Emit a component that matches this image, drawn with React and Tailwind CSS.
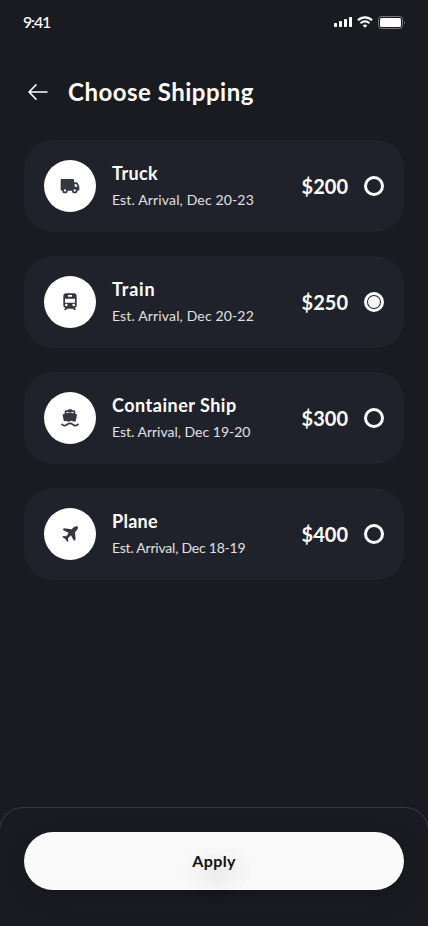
function TruckIcon() {
  return (
    <svg viewBox="0 0 60 60" fill="currentColor" className="size-5">
      <path
        fillRule="evenodd"
        d="M6 9h32c3 0 4 1 4 4v6h5c3 0 5 1 7 4l3 6c1 2 1 4 1 6v5c0 3-1 4-4 4h-2a8 8 0 0 1-16 0H23a8 8 0 0 1-16 0H6c-3 0-4-1-4-4V13c0-3 1-4 4-4Zm38 15v8h9l-4-7c-.500-.800-1-1-2-1h-3ZM15 40a3.500 3.500 0 1 0 0 7 3.500 3.500 0 0 0 0-7Zm29 0a3.500 3.500 0 1 0 0 7 3.500 3.500 0 0 0 0-7Z"
      />
    </svg>
  )
}

function TrainIcon() {
  return (
    <svg viewBox="0 0 60 60" fill="currentColor" className="size-5">
      <path
        fillRule="evenodd"
        d="M18 4h24c5 0 8 3 8 9v27c0 5-2 7-6 8l4 6h-6l-3-4H21l-3 4h-6l4-6c-4-1-6-3-6-8V13c0-6 3-9 8-9Zm6 5v5h12V9H24ZM15 20v12h30V20H15Zm4 15a4 4 0 1 0 0 8 4 4 0 0 0 0-8Zm22 0a4 4 0 1 0 0 8 4 4 0 0 0 0-8Z"
      />
    </svg>
  )
}

function ShipIcon() {
  return (
    <svg viewBox="0 0 60 60" fill="currentColor" className="size-5">
      <path
        fillRule="evenodd"
        d="M26 4h8c1.500 0 2 1 2 3h5c3 0 5 2 5 5v5c3 1 5 2 5 5l-4 17c-2 2-5 3-8 1-3-2-6-2-9 0s-6 2-9 0-5-1-8 0c-2-1-2-3-2-4L8 22c0-3 2-4 6-5v-5c0-3 2-5 5-5h5c0-2 .500-3 2-3Zm-7 8v4l11-3 11 3v-4H19Z"
      />
      <path
        d="M6 49c5 5 11 5 16 0 5-4 11-4 16 0 5 5 11 5 16 0"
        fill="none"
        stroke="currentColor"
        strokeWidth="5"
        strokeLinecap="round"
      />
    </svg>
  )
}

function PlaneIcon() {
  return (
    <svg viewBox="0 0 60 60" fill="currentColor" className="size-5">
      <path d="m8 17 4-4 23 3 7-7c4-3 9-3 11-1s1 6-2 10l-6 7 2 21-5 5-9-17-9 9 1 8-3 3-6-9-9-6 3-3 9 1 7-10L8 17Z" />
    </svg>
  )
}

const options = [
  { name: 'Truck', eta: 'Est. Arrival, Dec 20-23', price: '$200', icon: <TruckIcon />, nameClass: 'tracking-[0.4px]', etaClass: 'tracking-[0.15px]' },
  { name: 'Train', eta: 'Est. Arrival, Dec 20-22', price: '$250', icon: <TrainIcon />, nameClass: 'tracking-[0.8px]', etaClass: 'tracking-[0.15px]' },
  { name: 'Container Ship', eta: 'Est. Arrival, Dec 19-20', price: '$300', icon: <ShipIcon />, nameClass: 'tracking-[0.5px]', etaClass: 'tracking-[0px]' },
  { name: 'Plane', eta: 'Est. Arrival, Dec 18-19', price: '$400', icon: <PlaneIcon />, nameClass: 'tracking-[0.3px]', etaClass: 'tracking-[-0.22px]' },
]

function StatusBar() {
  return (
    <div className="flex h-11 items-center justify-between px-[23px]">
      <span className="text-[16px] font-medium leading-5 tracking-[-1.2px]">9:41</span>
      <div className="flex items-center gap-[5px]">
        <svg viewBox="0 0 18 10" fill="currentColor" className="h-2.5 w-[18px]">
          <rect x="0" y="6" width="3" height="4" rx="0.8" />
          <rect x="5" y="4" width="3" height="6" rx="0.8" />
          <rect x="10" y="2" width="3" height="8" rx="0.8" />
          <rect x="15" y="0" width="3" height="10" rx="0.8" />
        </svg>
        <svg viewBox="0 0 16 12" fill="none" stroke="currentColor" strokeWidth="2.200" className="h-3 w-4">
          <path d="M1 4.300C5 .400 11 .400 15 4.300" />
          <path d="M3.600 7.200c2.500-2.400 6.300-2.400 8.800 0" />
          <path d="M8 11.700 5.700 9.400c1.300-1.200 3.300-1.200 4.600 0L8 11.700Z" fill="currentColor" stroke="none" />
        </svg>
        <svg viewBox="0 0 27 13" fill="none" className="h-[13px] w-[27px]">
          <rect x="0.500" y="0.500" width="24" height="12" rx="3" stroke="#77787c" />
          <rect x="2" y="2" width="21" height="9" rx="1.500" fill="currentColor" />
          <path d="M26 4.500c.9.500.9 3.500 0 4Z" fill="#77787c" />
        </svg>
      </div>
    </div>
  )
}

function ShippingOption({ option, selected }) {
  return (
    <div className="flex h-[92px] items-center rounded-[28px] bg-[#20222b] px-5">
      <div className="flex size-[52px] shrink-0 items-center justify-center rounded-full bg-white text-[#35383f]">
        {option.icon}
      </div>
      <div className="ml-4 flex-1 whitespace-nowrap pb-0.5">
        <h2 className={`text-[18px] font-bold leading-[22px] ${option.nameClass}`}>{option.name}</h2>
        <p className={`mt-2 text-[14px] leading-4 text-[#e0e0e0] ${option.etaClass}`}>{option.eta}</p>
      </div>
      <span className="text-[20px] font-bold leading-6">{option.price}</span>
      <span className="ml-4 flex size-5 items-center justify-center rounded-full border-3 border-white">
        {selected && <span className="size-3 rounded-full bg-[#fafafa]" />}
      </span>
    </div>
  )
}

export default function App() {
  return (
    <main className="flex h-[926px] w-[428px] flex-col overflow-hidden bg-[#1a1b20] font-['Lato',sans-serif] text-white">
      <StatusBar />
      <header className="flex h-24 items-center pl-7">
        <svg viewBox="0 0 20 16" fill="none" stroke="currentColor" strokeWidth="1.500" strokeLinecap="round" strokeLinejoin="round" className="h-4 w-5">
          <path d="M19 8H1M8 .900 1 8l7 7.100" />
        </svg>
        <h1 className="ml-5 text-[24px] font-bold leading-8 tracking-[0.5px]">Choose Shipping</h1>
      </header>
      <section className="flex flex-col gap-6 px-6">
        {options.map((option) => (
          <ShippingOption key={option.name} option={option} selected={option.name === 'Train'} />
        ))}
      </section>
      <footer className="-mx-px mt-auto h-[119px] rounded-t-[24px] border border-b-0 border-[#35383f] px-6 pt-6">
        <button className="h-[58px] w-full rounded-full bg-[#fafafa] text-[16px] font-bold tracking-[0.4px] text-[#101010] shadow-[4px_8px_24px_rgba(0,0,0,0.15)] text-shadow-[4px_8px_24px_rgba(0,0,0,0.35)]">
          Apply
        </button>
      </footer>
    </main>
  )
}
